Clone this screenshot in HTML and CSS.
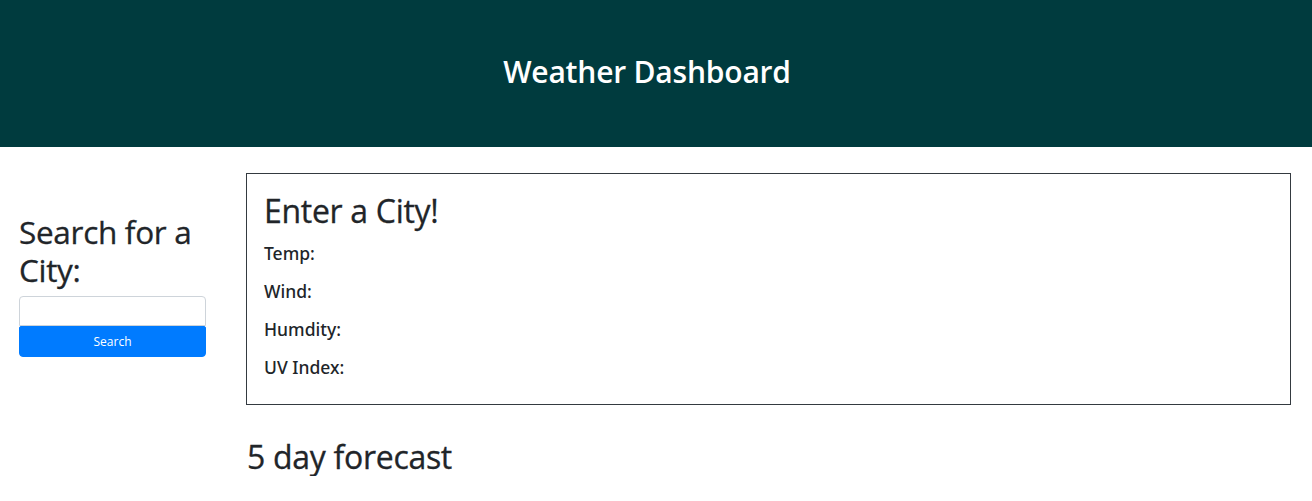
FILE: index.html
```html
<!DOCTYPE html>
<html lang="en">
<head>
<meta charset="utf-8">
<title>Weather Dashboard</title>
<link rel="stylesheet" href="styles.css">
</head>
<body>
<header class="site-header">
  <h1 class="site-title">Weather Dashboard</h1>
</header>
<main class="layout">
  <aside class="sidebar">
    <h2 class="sidebar-title">Search for a City:</h2>
    <form class="search-form">
      <input class="search-input" type="text" aria-label="City">
      <button class="search-btn" type="button">Search</button>
    </form>
  </aside>
  <section class="content">
    <div class="current-card">
      <h2 class="city-name">Enter a City!</h2>
      <p class="stat">Temp:</p>
      <p class="stat">Wind:</p>
      <p class="stat">Humdity:</p>
      <p class="stat">UV Index:</p>
    </div>
    <h2 class="forecast-title">5 day forecast</h2>
  </section>
</main>
</body>
</html>
```
FILE: styles.css
```css
* { box-sizing: border-box; }
html, body { margin: 0; padding: 0; }
body {
  font-family: "Open Sans", "Noto Sans", sans-serif;
  color: #212529;
  background: #fff;
}
.site-header {
  background: #003b3e;
  height: 147px;
  display: flex;
  align-items: center;
  justify-content: center;
  padding: 0 18px 4px 0;
}
.site-title {
  margin: 0;
  color: #fff;
  font-size: 30px;
  font-weight: 600;
  line-height: 1;
  letter-spacing: -0.2px;
}
.layout {
  display: flex;
  padding: 26px 21px 0 19px;
}
.sidebar {
  width: 187px;
  flex: none;
  margin-right: 40px;
  padding-top: 40px;
}
.sidebar-title {
  margin: 0 0 7px;
  font-size: 31.5px;
  font-weight: 500;
  line-height: 38px;
  letter-spacing: -0.3px;
  -webkit-text-stroke: 0.3px #212529;
}
.search-form { display: flex; flex-direction: column; }
.search-input {
  height: 30px;
  border: 1px solid #ced4da;
  border-radius: 4px 4px 0 0;
  padding: 0 8px;
  font: inherit;
}
.search-btn {
  height: 31px;
  border: 1px solid #007bff;
  background: #007bff;
  color: #fff;
  border-radius: 2px 2px 4px 4px;
  font-family: inherit;
  font-size: 12px;
}
.content { flex: 1; min-width: 0; }
.current-card {
  border: 1px solid #343a40;
  height: 232px;
  padding: 18px 17px 0;
}
.city-name {
  margin: 0 0 4px;
  font-size: 32px;
  font-weight: 500;
  line-height: 38px;
  letter-spacing: -0.3px;
  -webkit-text-stroke: 0.3px #212529;
}
.stat {
  margin: 0;
  font-family: "Noto Sans", "Open Sans", sans-serif;
  font-size: 17.5px;
  font-weight: 500;
  line-height: 38px;
}
.forecast-title {
  margin: 33px 0 0 1px;
  font-size: 32px;
  font-weight: 500;
  line-height: 38px;
  letter-spacing: -0.3px;
  -webkit-text-stroke: 0.3px #212529;
}
```
